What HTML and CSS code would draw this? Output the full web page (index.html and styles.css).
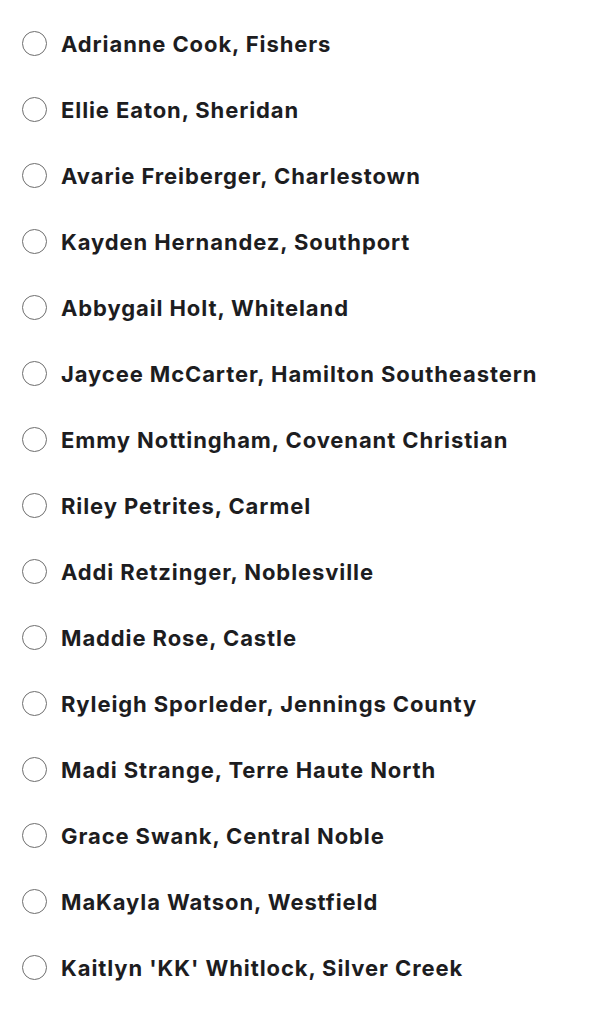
FILE: index.html
```html
<!DOCTYPE html>
<html>
<head>
<meta charset="utf-8">
<link rel="stylesheet" href="styles.css">
</head>
<body>
<form class="poll">
  <label class="option"><input type="radio" name="p"><span>Adrianne Cook, Fishers</span></label>
  <label class="option"><input type="radio" name="p"><span>Ellie Eaton, Sheridan</span></label>
  <label class="option"><input type="radio" name="p"><span>Avarie Freiberger, Charlestown</span></label>
  <label class="option"><input type="radio" name="p"><span>Kayden Hernandez, Southport</span></label>
  <label class="option"><input type="radio" name="p"><span>Abbygail Holt, Whiteland</span></label>
  <label class="option"><input type="radio" name="p"><span>Jaycee McCarter, Hamilton Southeastern</span></label>
  <label class="option"><input type="radio" name="p"><span>Emmy Nottingham, Covenant Christian</span></label>
  <label class="option"><input type="radio" name="p"><span>Riley Petrites, Carmel</span></label>
  <label class="option"><input type="radio" name="p"><span>Addi Retzinger, Noblesville</span></label>
  <label class="option"><input type="radio" name="p"><span>Maddie Rose, Castle</span></label>
  <label class="option"><input type="radio" name="p"><span>Ryleigh Sporleder, Jennings County</span></label>
  <label class="option"><input type="radio" name="p"><span>Madi Strange, Terre Haute North</span></label>
  <label class="option"><input type="radio" name="p"><span>Grace Swank, Central Noble</span></label>
  <label class="option"><input type="radio" name="p"><span>MaKayla Watson, Westfield</span></label>
  <label class="option"><input type="radio" name="p"><span>Kaitlyn 'KK' Whitlock, Silver Creek</span></label>
</form>
</body>
</html>
```
FILE: styles.css
```css
html, body {
  margin: 0;
  padding: 0;
  background: #ffffff;
}
.poll {
  display: flex;
  flex-direction: column;
  padding: 10px 0 0 22px;
  margin: 0;
}
.option {
  display: flex;
  align-items: center;
  gap: 14px;
  height: 66px;
  font-family: Inter, "Noto Sans", sans-serif;
  font-weight: 700;
  font-size: 22px;
  letter-spacing: 0.9px;
  color: #1d1d1f;
  cursor: pointer;
}
.option span {
  padding-top: 2px;
}
.option input {
  appearance: none;
  -webkit-appearance: none;
  margin: 0;
  width: 25px;
  height: 25px;
  flex: none;
  border: 1px solid #6e6e6e;
  border-radius: 50%;
  background: #fff;
}
```
